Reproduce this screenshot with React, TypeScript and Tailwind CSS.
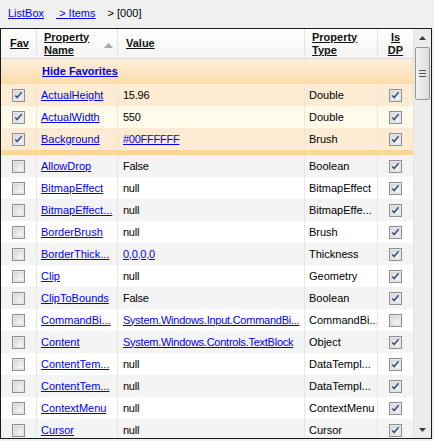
import React from 'react';

type Row = {
    name: string;
    value: string;
    valueLink?: boolean;
    type: string;
    isDp: boolean;
};

const FAVORITES: Row[] = [
    { name: 'ActualHeight', value: '15.96', type: 'Double', isDp: true },
    { name: 'ActualWidth', value: '550', type: 'Double', isDp: true },
    { name: 'Background', value: '#00FFFFFF', valueLink: true, type: 'Brush', isDp: true },
];

const ROWS: Row[] = [
    { name: 'AllowDrop', value: 'False', type: 'Boolean', isDp: true },
    { name: 'BitmapEffect', value: 'null', type: 'BitmapEffect', isDp: true },
    { name: 'BitmapEffect...', value: 'null', type: 'BitmapEffe...', isDp: true },
    { name: 'BorderBrush', value: 'null', type: 'Brush', isDp: true },
    { name: 'BorderThick...', value: '0,0,0,0', valueLink: true, type: 'Thickness', isDp: true },
    { name: 'Clip', value: 'null', type: 'Geometry', isDp: true },
    { name: 'ClipToBounds', value: 'False', type: 'Boolean', isDp: true },
    { name: 'CommandBi...', value: 'System.Windows.Input.CommandBi...', valueLink: true, type: 'CommandBi...', isDp: false },
    { name: 'Content', value: 'System.Windows.Controls.TextBlock', valueLink: true, type: 'Object', isDp: true },
    { name: 'ContentTem...', value: 'null', type: 'DataTempl...', isDp: true },
    { name: 'ContentTem...', value: 'null', type: 'DataTempl...', isDp: true },
    { name: 'ContextMenu', value: 'null', type: 'ContextMenu', isDp: true },
    { name: 'Cursor', value: 'null', type: 'Cursor', isDp: true },
];

const COLS = 'grid grid-cols-[36px_81px_187px_73px_35px]';

// Classic Windows checkbox
function CheckBox({ checked }: { checked: boolean }) {
    return (
        <svg width="13" height="13" viewBox="0 0 13 13">
            <defs>
                <linearGradient id="cbFill" x1="0" y1="0" x2="1" y2="1">
                    <stop offset="0" stopColor="#d8d8d8" />
                    <stop offset="1" stopColor="#fbfbfb" />
                </linearGradient>
            </defs>
            <rect x="0.5" y="0.5" width="12" height="12" fill="#f4f4f4" stroke="#8e8f8f" />
            <rect x="2" y="2" width="9" height="9" fill="url(#cbFill)" stroke="#c9c9c9" strokeWidth="0.6" />
            {checked && (
                <path d="M3.3 6.4 L5.2 8.6 L9.6 3.2" fill="none" stroke="#3a4f8f" strokeWidth="1.6" />
            )}
        </svg>
    );
}

function DataRow({ row, fav, bg }: { row: Row; fav: boolean; bg: string }) {
    return (
        <div className={`${COLS} h-[22px] shrink-0 ${bg}`}>
            <div className="flex items-center justify-center border-r border-[#e6e6e6]">
                <CheckBox checked={fav} />
            </div>
            <div className="flex items-center pl-[4px] border-r border-[#e6e6e6] whitespace-nowrap overflow-hidden">
                <span className="text-[#0000ee] underline">{row.name}</span>
            </div>
            <div className="flex items-center pl-[5px] border-r border-[#e6e6e6] whitespace-nowrap overflow-hidden">
                <span className={`tracking-[-0.25px] ${row.valueLink ? 'text-[#0000ee] underline' : 'text-black'}`}>{row.value}</span>
            </div>
            <div className="flex items-center pl-[4px] border-r border-[#e6e6e6] whitespace-nowrap overflow-hidden text-black">
                {row.type}
            </div>
            <div className="flex items-center justify-center">
                <CheckBox checked={row.isDp} />
            </div>
        </div>
    );
}

function ScrollBar() {
    return (
        <div className="w-[18px] flex flex-col bg-[#ececec] border-l border-[#e3e3e3]">
            <div className="h-[17px] flex items-center justify-center">
                <svg width="7" height="4" viewBox="0 0 7 4"><path d="M0 4 L3.5 0 L7 4 Z" fill="#3c3c3c" /></svg>
            </div>
            <div className="mx-[1px] mt-[1px] h-[53px] rounded-[2px] border border-[#979797] bg-gradient-to-r from-[#f2f2f2] to-[#dcdcdc] flex flex-col items-center justify-center gap-[2px]">
                <div className="w-[7px] h-[1px] bg-[#555]" />
                <div className="w-[7px] h-[1px] bg-[#555]" />
                <div className="w-[7px] h-[1px] bg-[#555]" />
            </div>
            <div className="flex-1" />
            <div className="h-[17px] flex items-center justify-center">
                <svg width="7" height="4" viewBox="0 0 7 4"><path d="M0 0 L3.5 4 L7 0 Z" fill="#3c3c3c" /></svg>
            </div>
        </div>
    );
}

export default function App() {
    return (
        <div className="w-[434px] h-[441px] bg-[#f0f0f0] text-[11px] leading-[13px] font-['Liberation_Sans',Arial,sans-serif] overflow-hidden">
            {/* Breadcrumb */}
            <div className="h-[28px] flex items-center pl-[8px] pb-[2px]">
                <span className="text-[#0000ee] underline">ListBox</span>
                <span className="ml-[12px] text-[#0000ee] underline">&nbsp;&gt; Items</span>
                <span className="ml-[12px] text-black">&gt; [000]</span>
            </div>

            {/* Grid */}
            <div className="w-[432px] h-[411px] border border-[#1a1a1a] bg-white flex overflow-hidden">
                <div className="w-[412px] flex flex-col overflow-hidden">
                    {/* Header */}
                    <div className={`${COLS} h-[30px] shrink-0 bg-gradient-to-b from-white to-[#f4f4f4] border-b border-[#d9d9d9] font-bold text-[#111] underline`}>
                        <div className="flex items-center pl-[9px] border-r border-[#e2e2e2]">Fav</div>
                        <div className="flex items-center pl-[7px] pr-[4px] border-r border-[#e2e2e2]">
                            <span>Property<br />Name</span>
                            <svg className="ml-auto mt-[4px]" width="9" height="5" viewBox="0 0 9 5"><path d="M0 5 L4.5 0 L9 5 Z" fill="#a9a9a9" /></svg>
                        </div>
                        <div className="flex items-center pl-[8px] border-r border-[#e2e2e2]">Value</div>
                        <div className="flex items-center pl-[7px] border-r border-[#e2e2e2]">
                            <span>Property<br />Type</span>
                        </div>
                        <div className="flex items-center justify-center text-center">
                            <span>Is<br />DP</span>
                        </div>
                    </div>

                    {/* Favorites band */}
                    <div className="h-[25px] shrink-0 flex items-center pl-[41px] bg-gradient-to-b from-[#fdefdc] to-[#fcdcaa]">
                        <span className="font-bold text-[#0000ee] underline">Hide Favorites</span>
                    </div>
                    {FAVORITES.map((row, i) => (
                        <DataRow key={row.name} row={row} fav bg={i % 2 === 0 ? 'bg-[#fdecd3]' : 'bg-[#fffbeb]'} />
                    ))}
                    <div className="h-[5px] shrink-0 bg-[#fcd699]" />

                    {ROWS.map((row, i) => (
                        <DataRow key={i} row={row} fav={false} bg={i % 2 === 0 ? 'bg-[#f4f4f4]' : 'bg-white'} />
                    ))}
                </div>
                <ScrollBar />
            </div>
        </div>
    );
}
